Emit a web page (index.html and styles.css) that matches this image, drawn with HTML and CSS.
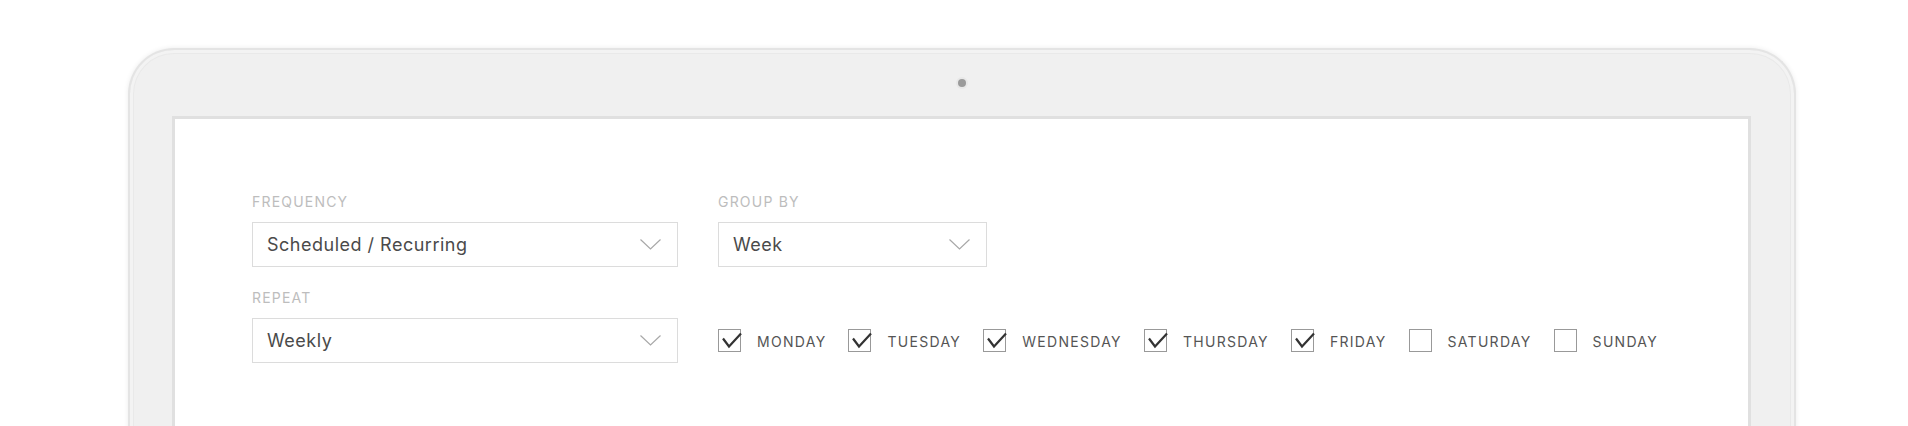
FILE: index.html
```html
<!DOCTYPE html>
<html lang="en">
<head>
<meta charset="utf-8">
<title>Schedule</title>
<link rel="stylesheet" href="styles.css">
</head>
<body>
<div class="laptop">
  <div class="bezel-top"><span class="camera"></span></div>
  <div class="screen">
    <div class="form">
      <div class="field">
        <div class="label">FREQUENCY</div>
        <div class="select wide">
          <span class="value">Scheduled / Recurring</span>
          <svg class="chev" width="21" height="11" viewBox="0 0 21 11"><path d="M0.5 0.5 L10.5 10 L20.5 0.5" fill="none" stroke="#a8a8a8" stroke-width="1.2"/></svg>
        </div>
      </div>
      <div class="field">
        <div class="label">GROUP BY</div>
        <div class="select narrow">
          <span class="value">Week</span>
          <svg class="chev" width="21" height="11" viewBox="0 0 21 11"><path d="M0.5 0.5 L10.5 10 L20.5 0.5" fill="none" stroke="#a8a8a8" stroke-width="1.2"/></svg>
        </div>
      </div>
      <div class="field">
        <div class="label">REPEAT</div>
        <div class="select wide">
          <span class="value">Weekly</span>
          <svg class="chev" width="21" height="11" viewBox="0 0 21 11"><path d="M0.5 0.5 L10.5 10 L20.5 0.5" fill="none" stroke="#a8a8a8" stroke-width="1.2"/></svg>
        </div>
      </div>
      <div class="days">
        <label class="day"><span class="box checked"><svg width="23" height="23" viewBox="0 0 23 23"><path d="M5 9.5 L11 17.5 L23 4.5" fill="none" stroke="#333" stroke-width="2.2"/></svg></span><span class="dname">MONDAY</span></label>
        <label class="day"><span class="box checked"><svg width="23" height="23" viewBox="0 0 23 23"><path d="M5 9.5 L11 17.5 L23 4.5" fill="none" stroke="#333" stroke-width="2.2"/></svg></span><span class="dname">TUESDAY</span></label>
        <label class="day"><span class="box checked"><svg width="23" height="23" viewBox="0 0 23 23"><path d="M5 9.5 L11 17.5 L23 4.5" fill="none" stroke="#333" stroke-width="2.2"/></svg></span><span class="dname">WEDNESDAY</span></label>
        <label class="day"><span class="box checked"><svg width="23" height="23" viewBox="0 0 23 23"><path d="M5 9.5 L11 17.5 L23 4.5" fill="none" stroke="#333" stroke-width="2.2"/></svg></span><span class="dname">THURSDAY</span></label>
        <label class="day"><span class="box checked"><svg width="23" height="23" viewBox="0 0 23 23"><path d="M5 9.5 L11 17.5 L23 4.5" fill="none" stroke="#333" stroke-width="2.2"/></svg></span><span class="dname">FRIDAY</span></label>
        <label class="day"><span class="box"></span><span class="dname">SATURDAY</span></label>
        <label class="day"><span class="box"></span><span class="dname">SUNDAY</span></label>
      </div>
    </div>
  </div>
</div>
</body>
</html>
```

FILE: styles.css
```css
html, body {
  margin: 0;
  padding: 0;
  background: #fff;
  overflow: hidden;
}

body {
  font-family: Inter, "Noto Sans", sans-serif;
  height: 426px;
}

.laptop {
  box-sizing: border-box;
  margin: 48px 0 0 128px;
  width: 1668px;
  height: 420px;
  padding: 0 43px 0 42px;
  background: #f0f0f0;
  border: 2px solid #e4e4e4;
  border-bottom: none;
  border-radius: 46px 46px 0 0;
  box-shadow: 0 0 5px rgba(0, 0, 0, 0.08), inset 0 0 0 3px #f3f3f3, inset 0 0 0 4px #e9e9e9;
}

.bezel-top {
  height: 66px;
  display: flex;
  align-items: center;
  justify-content: center;
}

.camera {
  width: 8px;
  height: 8px;
  border-radius: 50%;
  background: #9b9b9b;
  box-shadow: 0 0 0 2px #e8e8e8;
}

.screen {
  background: #fff;
  border: 3px solid #e0e0e0;
  border-bottom: none;
  height: 400px;
  padding: 75px 0 0 77px;
}

.form {
  display: grid;
  grid-template-columns: 426px auto;
  column-gap: 40px;
  row-gap: 23px;
  justify-content: start;
}

.field {
  display: flex;
  flex-direction: column;
}

.label {
  font-size: 14px;
  line-height: 16px;
  color: #bdbdbd;
  letter-spacing: 1.2px;
  margin-bottom: 12px;
}

.select {
  box-sizing: border-box;
  height: 45px;
  border: 1px solid #dcdcdc;
  display: flex;
  align-items: center;
  justify-content: space-between;
  padding: 0 16px 0 14px;
}

.select.wide { width: 426px; }
.select.narrow { width: 269px; }

.value {
  font-size: 18px;
  color: #4a4a4a;
  letter-spacing: 0.5px;
}

.chev { display: block; }

.days {
  align-self: end;
  height: 45px;
  display: flex;
  align-items: center;
  gap: 22px;
}

.day {
  display: flex;
  align-items: center;
  gap: 16px;
}

.box {
  box-sizing: border-box;
  width: 23px;
  height: 23px;
  border: 1px solid #999;
  position: relative;
}

.box svg {
  position: absolute;
  left: -1px;
  top: -1px;
  overflow: visible;
}

.dname {
  font-size: 14px;
  line-height: 16px;
  padding-top: 2px;
  color: #555;
  letter-spacing: 1.3px;
}
```
